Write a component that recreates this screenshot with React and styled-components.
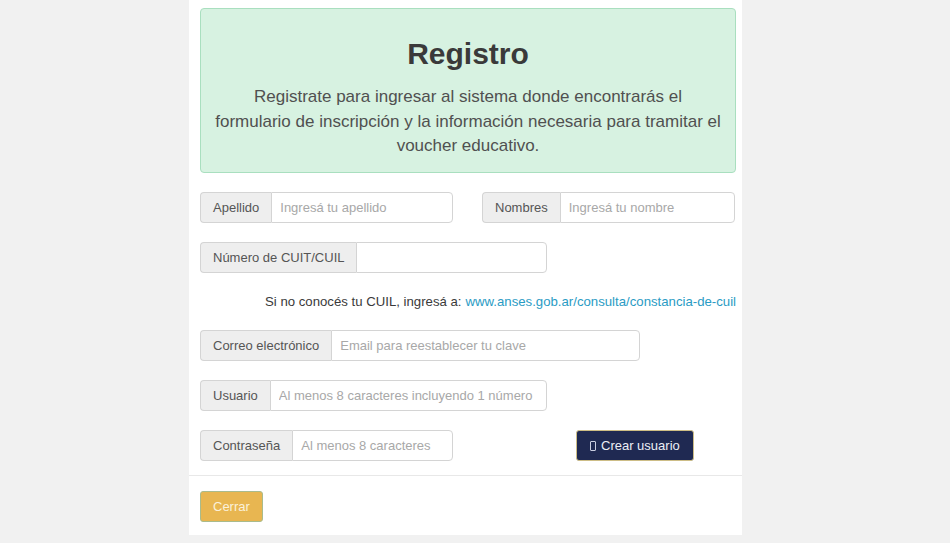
import React from "react";
import styled, { createGlobalStyle } from "styled-components";

const Global = createGlobalStyle`
  html, body { margin: 0; padding: 0; background: #f1f1f1; }
  body { font-family: "Liberation Sans", Arial, sans-serif; }
  * { box-sizing: border-box; }
`;

const Page = styled.div`
  width: 950px;
  height: 543px;
  padding-left: 189px;
  background: #f1f1f1;
`;

const Panel = styled.div`
  width: 553px;
  background: #ffffff;
`;

const Body = styled.div`
  padding: 8px 6px 14px 11px;
`;

const Alert = styled.div`
  background: #d7f2e1;
  border: 1px solid #a9dfbf;
  border-radius: 4px;
  height: 165px;
  padding: 28px 8px 0;
  text-align: center;
`;

const Title = styled.h1`
  margin: 0;
  font-size: 30px;
  line-height: 34px;
  font-weight: 700;
  color: #3a3a3a;
`;

const Lead = styled.p`
  margin: 14px 0 0;
  font-size: 17px;
  line-height: 24.5px;
  color: #505050;
`;

const Form = styled.div`
  margin-top: 19px;
  display: flex;
  flex-direction: column;
`;

const Row = styled.div`
  display: flex;
  align-items: center;
  gap: ${(p) => p.$gap ?? 29}px;
  margin-top: ${(p) => p.$mt ?? 19}px;
`;

const Group = styled.div`
  display: flex;
  width: ${(p) => p.$w}px;
  height: 31px;
`;

const Addon = styled.span`
  display: flex;
  align-items: center;
  padding: 0 12px;
  background: #eeeeee;
  border: 1px solid #d4d4d4;
  border-right: none;
  border-radius: 4px 0 0 4px;
  font-size: 13px;
  color: #555;
  white-space: nowrap;
`;

const Input = styled.input`
  flex: 1;
  min-width: 0;
  height: 100%;
  border: 1px solid #d4d4d4;
  border-radius: 0 4px 4px 0;
  padding: 0 8px;
  font-family: "Liberation Sans", Arial, sans-serif;
  font-size: 13px;
  color: #555;
  background: #fff;
  outline: none;
  &::placeholder { color: #a8a8a8; }
`;

const Help = styled.div`
  height: 57px;
  display: flex;
  align-items: center;
  justify-content: flex-end;
  font-size: 13.2px;
  color: #3a3a3a;
  white-space: nowrap;
`;

const Link = styled.a`
  color: #2a9bc4;
  text-decoration: none;
  margin-left: 4px;
`;

const Button = styled.button`
  height: 31px;
  padding: 0 ${(p) => p.$px || 12}px;
  border-radius: 3px;
  font-family: "Liberation Sans", Arial, sans-serif;
  font-size: 13px;
  display: inline-flex;
  align-items: center;
  gap: 5px;
  cursor: pointer;
  background: ${(p) => p.$bg};
  border: 1px solid ${(p) => p.$border};
  color: ${(p) => p.$color};
  margin-left: ${(p) => p.$ml || 0}px;
`;

const Tofu = styled.span`
  display: inline-block;
  width: 6px;
  height: 10px;
  border: 1px solid #c9cde0;
  border-radius: 1px;
`;

const Footer = styled.div`
  border-top: 1px solid #e8e8e8;
  padding: 15px 0 13px 11px;
`;

export default function App() {
  return (
    <>
      <Global />
      <Page>
        <Panel>
          <Body>
            <Alert>
              <Title>Registro</Title>
              <Lead>
                Registrate para ingresar al sistema donde encontrarás el
                <br />
                formulario de inscripción y la información necesaria para tramitar el
                <br />
                voucher educativo.
              </Lead>
            </Alert>
            <Form>
              <Row $mt={0}>
                <Group $w={253}>
                  <Addon>Apellido</Addon>
                  <Input placeholder="Ingresá tu apellido" />
                </Group>
                <Group $w={253}>
                  <Addon>Nombres</Addon>
                  <Input placeholder="Ingresá tu nombre" />
                </Group>
              </Row>
              <Row>
                <Group $w={347}>
                  <Addon>Número de CUIT/CUIL</Addon>
                  <Input />
                </Group>
              </Row>
              <Help>
                Si no conocés tu CUIL, ingresá a:
                <Link href="#">www.anses.gob.ar/consulta/constancia-de-cuil</Link>
              </Help>
              <Row $mt={0}>
                <Group $w={440}>
                  <Addon>Correo electrónico</Addon>
                  <Input placeholder="Email para reestablecer tu clave" />
                </Group>
              </Row>
              <Row>
                <Group $w={347}>
                  <Addon>Usuario</Addon>
                  <Input placeholder="Al menos 8 caracteres incluyendo 1 número" />
                </Group>
              </Row>
              <Row $gap={0}>
                <Group $w={253}>
                  <Addon>Contraseña</Addon>
                  <Input placeholder="Al menos 8 caracteres" />
                </Group>
                <Button $ml={123} $px={13} $bg="#1f2952" $border="#cdbd86" $color="#eceef6">
                  <Tofu />
                  Crear usuario
                </Button>
              </Row>
            </Form>
          </Body>
          <Footer>
            <Button $px={12} $bg="#e8b651" $border="#a9bb8c" $color="#fbf1da">
              Cerrar
            </Button>
          </Footer>
        </Panel>
      </Page>
    </>
  );
}
